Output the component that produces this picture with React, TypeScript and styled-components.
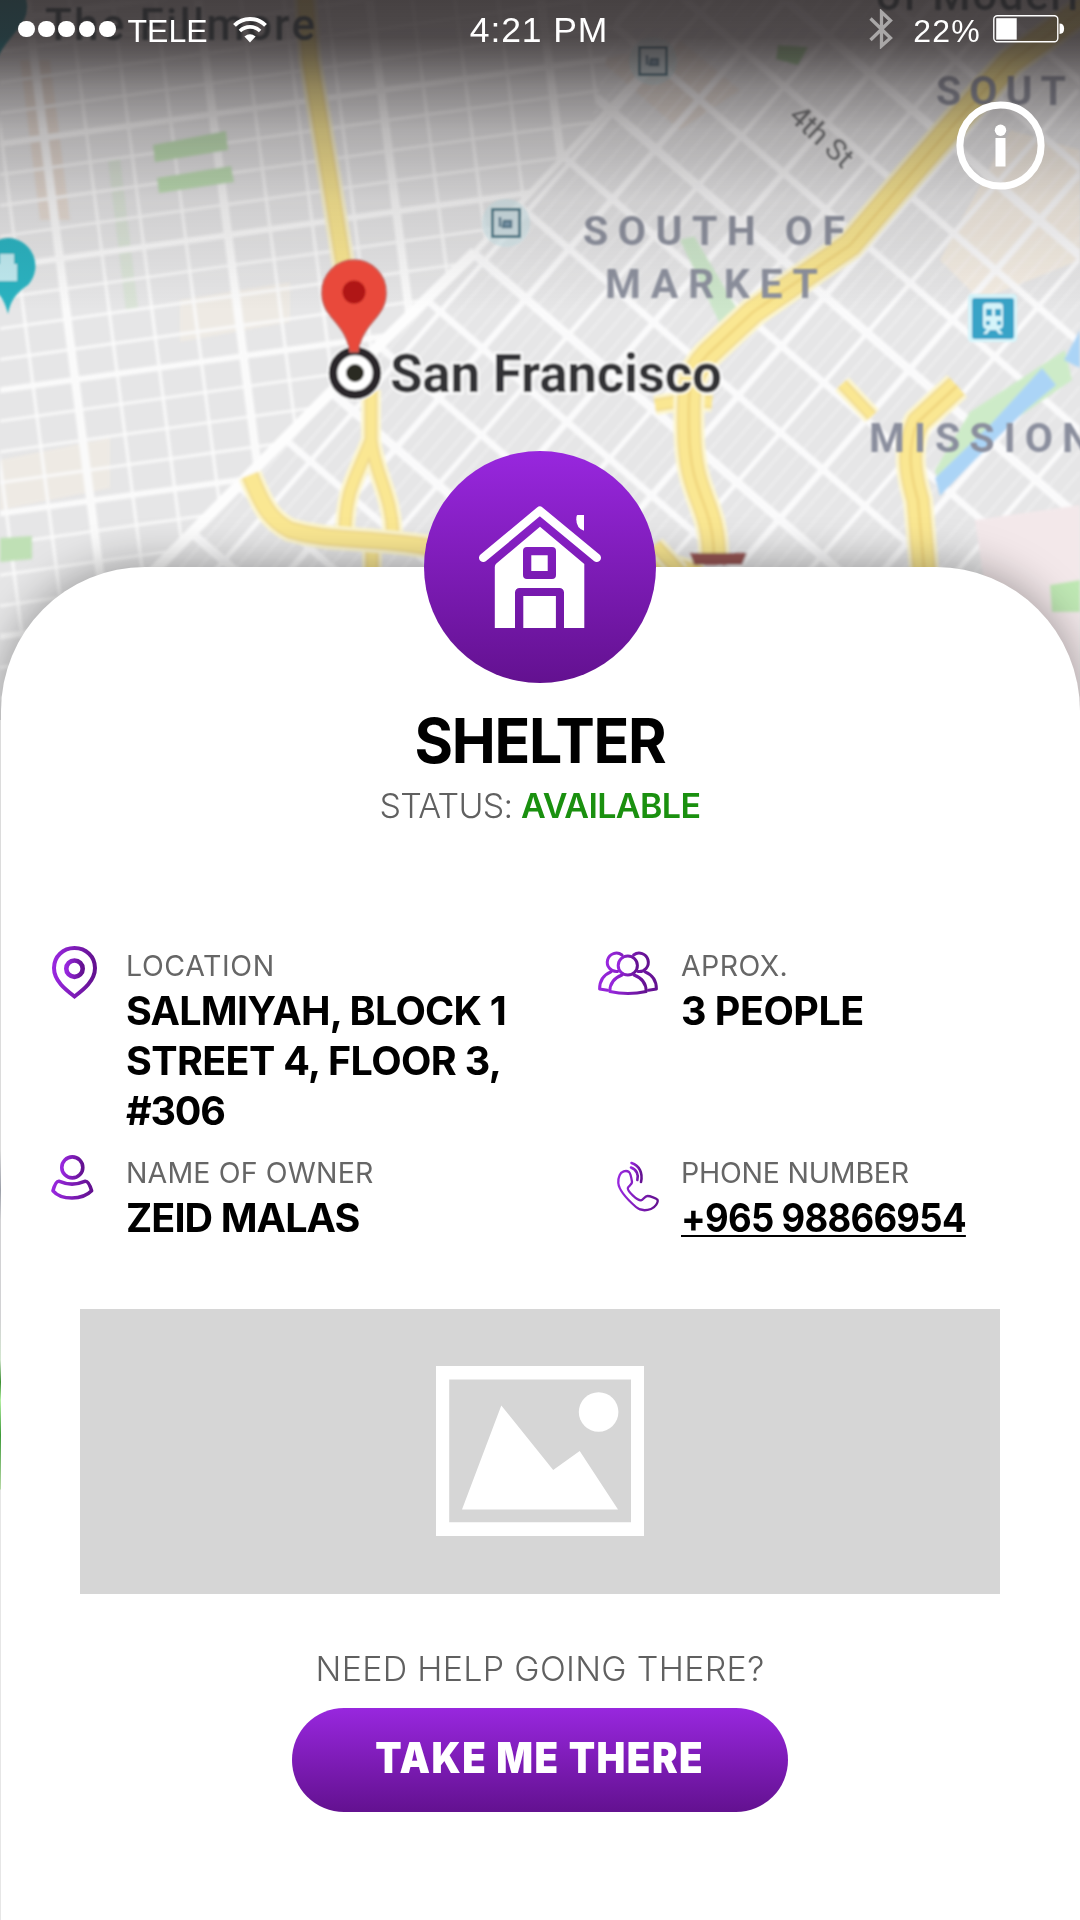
import React from "react";
import styled, { createGlobalStyle } from "styled-components";

const GlobalStyle = createGlobalStyle`
  * { box-sizing: border-box; }
  body { margin: 0; background: #fff; }
  p, h1 { margin: 0; }
`;

const Page = styled.main`
  position: relative;
  display: flex;
  flex-direction: column;
  width: 1080px;
  height: 1920px;
  overflow: hidden;
  background: #fff;
  font-family: Inter, "Liberation Sans", sans-serif;
`;

const MapBackdrop = styled.svg`
  position: absolute;
  top: 0;
  left: 0;
  width: 1080px;
  height: 760px;
`;

const StatusBar = styled.header`
  position: relative;
  display: grid;
  grid-template-columns: 1fr auto 1fr;
  align-items: center;
  height: 58px;
  padding: 0 15px 0 18px;
  color: #fff;
  font-family: "Liberation Sans", Arial, sans-serif;
`;

const StatusGroup = styled.div<{ $end?: boolean }>`
  display: flex;
  align-items: center;
  justify-content: ${(p) => (p.$end ? "flex-end" : "flex-start")};
`;

const Signal = styled.div`
  display: flex;
  gap: 3.4px;
`;

const Dot = styled.i`
  width: 16.8px;
  height: 16.8px;
  border-radius: 50%;
  background: #fff;
`;

const StatusText = styled.span<{ $size: number; $spacing?: number; $margin?: string }>`
  font-size: ${(p) => p.$size}px;
  line-height: 40px;
  letter-spacing: ${(p) => p.$spacing ?? 0}px;
  margin: ${(p) => p.$margin ?? "0"};
  white-space: nowrap;
`;

const Toolbar = styled.nav`
  position: relative;
  display: flex;
  justify-content: flex-end;
  height: 509px;
  padding: 43px 35px 0 0;
`;

const InfoButton = styled.button`
  width: 89px;
  height: 89px;
  padding: 0;
  border: 0;
  background: none;
`;

const Card = styled.section`
  position: relative;
  display: flex;
  flex-direction: column;
  align-items: center;
  flex: 1;
  margin-left: 1px;
  padding-right: 1px;
  border-radius: 144px 144px 0 0;
  background: #fff;
  box-shadow: 0 -2px 44px rgba(0, 0, 0, 0.36);
`;

/* Sliver of the map's tail that shows beside the card. */
const MapEdge = styled.div`
  position: absolute;
  left: 0;
  top: 720px;
  width: 1px;
  height: 1200px;
  background: linear-gradient(
    #dcdcdc 0,
    #dcdcdc 430px,
    #9b9fa8 470px,
    #d2d2d4 500px,
    #d2d2d4 600px,
    #d3e6cf 640px,
    #3c8f32 662px,
    #b5f0a4 680px,
    #3d9a38 715px,
    #b6d8a4 769px,
    #e6e6e6 770px
  );
`;

const Badge = styled.div`
  width: 232px;
  height: 232px;
  margin-top: -116px;
  border-radius: 50%;
  background: linear-gradient(#9827de, #631190);
`;

const Title = styled.h1`
  margin-top: 23px;
  font-size: 62px;
  line-height: 70px;
  font-weight: 700;
  letter-spacing: -1.4px;
  transform: scaleX(0.95);
  color: #000;
`;

const Caption = styled.p<{ $top: number; $spacing: number }>`
  margin-top: ${(p) => p.$top}px;
  font-size: 34px;
  line-height: 40px;
  font-weight: 300;
  letter-spacing: ${(p) => p.$spacing}px;
  color: #606060;
  white-space: pre;
`;

const Available = styled.strong`
  font-weight: 600;
  letter-spacing: -0.6px;
  color: #1a900f;
`;

const Details = styled.div`
  display: grid;
  grid-template-columns: 548px 1fr;
  row-gap: 19px;
  width: 100%;
  margin-top: 122px;
  padding-left: 49px;
`;

const Detail = styled.div<{ $iconCell: number }>`
  display: grid;
  grid-template-columns: ${(p) => p.$iconCell}px 1fr;
`;

const IconCell = styled.div<{ $top: number; $left?: number }>`
  padding-left: ${(p) => p.$left ?? 0}px;
  margin-top: ${(p) => p.$top}px;
  svg { display: block; overflow: visible; }
`;

const Label = styled.p<{ $spacing: number }>`
  font-size: 28.5px;
  line-height: 36px;
  font-weight: 400;
  letter-spacing: ${(p) => p.$spacing}px;
  color: #666;
`;

const Value = styled.p<{ $spacing: number; $first?: boolean }>`
  margin-top: ${(p) => (p.$first ? 2 : 0)}px;
  font-size: 39.5px;
  line-height: 50px;
  font-weight: 700;
  letter-spacing: ${(p) => p.$spacing}px;
  color: #000;
  white-space: nowrap;
`;

const PhoneLink = styled.a`
  display: inline-block;
  transform: scaleX(0.924);
  transform-origin: left;
  color: inherit;
  text-decoration: underline;
  text-decoration-thickness: 2.4px;
  text-underline-offset: 3px;
  text-decoration-skip-ink: none;
`;

const Placeholder = styled.div`
  display: flex;
  align-items: center;
  justify-content: center;
  width: 920px;
  height: 285px;
  margin-top: 66px;
  background: #d6d6d6;
`;

const Action = styled.button`
  width: 496px;
  height: 104px;
  margin-top: 19px;
  padding: 0 0 4px;
  border: 0;
  border-radius: 52px;
  background: linear-gradient(#9827de, #631190);
  color: #fff;
  font-family: inherit;
  font-size: 42.5px;
  font-weight: 900;
  letter-spacing: 1.6px;
  white-space: nowrap;
`;

const ActionLabel = styled.span`
  display: inline-block;
  transform: scaleX(0.905);
`;

const range = (from: number, to: number, step: number) => {
  const out: number[] = [];
  for (let v = from; v <= to; v += step) out.push(v);
  return out;
};

const Road = ({ d, w = 16 }: { d: string; w?: number }) => (
  <g fill="none" strokeLinejoin="round">
    <path d={d} stroke="#fdf6cf" strokeWidth={w + 7} />
    <path d={d} stroke="#efd98c" strokeWidth={w} />
    <path d={d} stroke="#fae792" strokeWidth={w - 4} />
    {w > 20 && <path d={d} stroke="#efd47c" strokeWidth="2.5" />}
  </g>
);

const TransitStop = ({ x, y }: { x: number; y: number }) => (
  <g transform={`translate(${x} ${y})`}>
    <circle r="24" fill="#cfe8ec" opacity=".6" />
    <rect x="-13.5" y="-13.5" width="27" height="27" fill="#cfe0e5" stroke="#527f8d" strokeWidth="3" />
    <path d="M-6 -6v10M-2 -2h7v6h-8z" stroke="#5b7f92" strokeWidth="2.5" fill="#7f9bb0" />
  </g>
);

const Map = () => (
  <MapBackdrop viewBox="0 0 1080 760">
    <defs>
      <clipPath id="west"><path d="M0 0H620L590 130L475 250L330 390L145 575V760H0Z" /></clipPath>
      <clipPath id="east"><path d="M620 0L590 130L475 250L330 390L145 575V760H1080V0Z" /></clipPath>
      <filter id="soft"><feGaussianBlur stdDeviation="1.5" /></filter>
      <filter id="softer"><feGaussianBlur stdDeviation="1" /></filter>
      <linearGradient id="shade" x1="0" y1="0" x2="0" y2="1">
        <stop offset="0" stopColor="#282223" stopOpacity=".84" />
        <stop offset=".12" stopColor="#282223" stopOpacity=".8" />
        <stop offset=".18" stopColor="#282223" stopOpacity=".7" />
        <stop offset=".28" stopColor="#282223" stopOpacity=".5" />
        <stop offset=".42" stopColor="#282223" stopOpacity=".3" />
        <stop offset=".65" stopColor="#282223" stopOpacity=".12" />
        <stop offset="1" stopColor="#282223" stopOpacity="0" />
      </linearGradient>
    </defs>
    <rect width="1080" height="760" fill="#e6e6e7" />
    <g filter="url(#soft)">
      <g clipPath="url(#west)">
        <path d="M20 60h30l20 160h-30z" fill="#e4dad2" />
        <path d="M180 300l110-18v40l-110 20zM0 460l110-22v50l-110 22z" fill="#eeeae4" />
        <path d="M108 160l12-2 18 150-12 3z" fill="#d5e3d2" opacity=".7" />
        <g transform="rotate(-8)" stroke="#fafafa" fill="none">
          {range(-10, 800, 30.5).map((y, i) => (
            <path key={y} d={`M-150 ${y}H900`} strokeWidth={i % 4 === 1 ? 6 : 2.8} />
          ))}
          {range(-100, 800, 42.5).map((x, i) => (
            <path key={x} d={`M${x} -80L${x - 12} 860`} strokeWidth={i % 4 === 3 ? 8.5 : 3} />
          ))}
        </g>
        <path d="M153 145L226 131L228 150L155 162ZM157 178L231 166L234 182L159 193ZM0 538L32 536V559L0 562Z" fill="#bfe0b5" />
      </g>
      <g clipPath="url(#east)">
        <path d="M1010 130L1080 150V260L980 300L940 260Z" fill="#f3ece2" />
        <path d="M600 60l80-20 60 50-60 40z" fill="#e6dcd2" opacity=".7" />
        <g transform="translate(479 258) rotate(41)" stroke="#fafafb" fill="none">
          {range(-330, 870, 14).map((x) => (
            <path key={x} d={`M${x} -520V640`} strokeWidth="2" opacity=".45" />
          ))}
          {range(-528, 620, 66).map((y, i) => (
            <path key={y} d={`M-400 ${y}H800`} strokeWidth={i % 3 === 2 ? 9 : 7} />
          ))}
          {range(-330, 870, 56).map((x, i) => (
            <path key={x} d={`M${x} -520V640`} strokeWidth={i % 2 ? 6.5 : 5} />
          ))}
        </g>
        <path d="M680 240l14-4 44 74-18 14z" fill="#cde6cb" />
        <path d="M778 45l30 2-10 18-22-6z" fill="#9fc897" />
      </g>
      <path d="M140 585L330 393L475 252" stroke="#fdfdfd" strokeWidth="11" fill="none" />
      <path d="M475 252L650 65" stroke="#fafafa" strokeWidth="6" fill="none" />
      <path d="M975 520L1080 505V760H1010Z" fill="#f3e8ea" />
      <path d="M970 412L1065 350L1072 380L1000 430L940 490L935 470Z" fill="#cdebc8" />
      <path d="M1080 330L1064 360L1080 368ZM1042 368L1056 385L1026 410L975 460L940 496L935 478L990 425Z" fill="#abd4f6" />
      <path d="M1050 585L1080 580V612H1052Z" fill="#bfe8b4" />
      <Road d="M305 -5L310 60L330 180L346 280" />
      <Road d="M371 390V440C355 480 345 490 345 535M371 440C375 475 392 495 393 535M372 540V580" w={13} />
      <Road d="M250 475C262 505 270 520 290 530C330 542 360 536 430 547C520 560 610 540 700 575" w={17} />
      <Road d="M655 405L688 400L712 402M655 545L680 572" w={13} />
      <Road d="M1090 5L1010 62L953 125L901 185L850 245L753 312L708 354C688 375 688 390 689 430C690 500 714 500 714 560" w={24} />
      <Road d="M842 384L872 416" w={12} />
      <Road d="M957 386L918 422C905 450 912 480 918 500L925 580" w={23} />
      <path d="M690 553H747L742 565H694Z" fill="#965452" />
    </g>
    <g filter="url(#softer)" fontFamily="Roboto, sans-serif">
      <path d="M-8 -20a28 28 0 0 1 32 40C16 34 2 45 -4 62Z" fill="#1f94a3" />
      <path d="M8 238a28 28 0 0 1 20 47C18 292 11 298 8 314C4 298 -2 292 -12 285A28 28 0 0 1 8 238Z" fill="#2bb3c1" />
      <path d="M0 254h14v10h3v17H-2v-17h2z" fill="#bfeaf0" />
      <text x="45" y="40" fontSize="44" fontWeight="500" textLength="270" fill="#3d565d">The Fillmore</text>
      <text x="876" y="10" fontSize="44" fontWeight="500" textLength="216" fill="#3d565d">of Modern</text>
      <text x="583" y="245" fontSize="41" fontWeight="700" textLength="262" fill="#8c909d">SOUTH OF</text>
      <text x="605" y="298" fontSize="41" fontWeight="700" textLength="213" fill="#8c909d">MARKET</text>
      <text x="936" y="105" fontSize="41" fontWeight="700" letterSpacing="8" fill="#8c909d">SOUT</text>
      <text x="869" y="452" fontSize="41" fontWeight="700" textLength="222" fill="#8a8e9d">MISSION</text>
      <text transform="translate(787 118) rotate(43)" fontSize="30" fontWeight="500" textLength="76" fill="#77797b" stroke="#f0f0f0" strokeWidth="3" paintOrder="stroke">4th St</text>
      <TransitStop x={506} y={223} />
      <TransitStop x={653} y={61} />
      <rect x="968" y="294" width="49" height="48" rx="4" fill="#d5f4fa" />
      <rect x="972" y="298" width="42" height="41" rx="3" fill="#37a3c7" />
      <path d="M983 306q0-3 4-3h12q4 0 4 3v19q0 4-4 4l4 5h-4l-3-4h-6l-3 4h-4l4-5q-4 0-4-4z" fill="#d5f4fa" />
      <path d="M986 309h6v7h-6zM995 309h6v7h-6zM986 321h4v4h-4zM997 321h4v4h-4z" fill="#37a3c7" />
    </g>
    <rect width="1080" height="310" fill="url(#shade)" />
    <g filter="url(#softer)">
      <circle cx="355" cy="373" r="28" fill="#fff" />
      <circle cx="355" cy="373" r="22" fill="#fff" stroke="#2b282c" strokeWidth="8.5" />
      <circle cx="355" cy="373" r="9" fill="#2b2a24" />
      <path d="M354 260a32 32 0 0 1 32 33C386 318 362 322 358 352H350C346 322 322 318 322 293A32 32 0 0 1 354 260Z" fill="#e9483a" stroke="#c55c55" strokeWidth="1.5" />
      <circle cx="354" cy="292" r="11.5" fill="#b01217" />
      <text x="390" y="392" fontFamily="Roboto, sans-serif" fontSize="53" fontWeight="700" textLength="332" fill="#333336" stroke="#fff" strokeWidth="5" strokeOpacity=".7" paintOrder="stroke">San Francisco</text>
    </g>
  </MapBackdrop>
);

const Wifi = () => (
  <svg width="34" height="27" viewBox="0 0 34 27" fill="none" stroke="#fff">
    <path d="M1.5 9.3A22 22 0 0 1 32.5 9.3" strokeWidth="4" />
    <path d="M6.9 15A14.5 14.5 0 0 1 27.1 15" strokeWidth="3.6" />
    <path d="M17 26.5L11.4 20.6Q17 15.8 22.6 20.6Z" fill="#fff" stroke="none" />
  </svg>
);

const Bluetooth = () => (
  <svg width="24" height="40" viewBox="0 0 24 40" fill="none" stroke="#a9a7a7" strokeWidth="3.3">
    <path d="M1.5 9.5L21.5 29L12.5 37V3L21.5 11.5L1.5 31" />
  </svg>
);

const Battery = () => (
  <svg width="72" height="28" viewBox="0 0 72 28">
    <rect x=".8" y=".8" width="64" height="26" rx="3.5" fill="none" stroke="#fff" strokeWidth="1.4" />
    <rect x="3.2" y="3.2" width="20.5" height="21.4" fill="#fff" />
    <path d="M66.5 8.5q4.6 0 4.6 5.2t-4.6 5.2z" fill="#fff" />
  </svg>
);

const House = () => (
  <svg width="232" height="232" viewBox="424 451 232 232">
    <path d="M483.3 557.8L539.8 510.8L596.7 557.8" fill="none" stroke="#fff" strokeWidth="8.6" strokeLinecap="round" strokeLinejoin="round" />
    <path
      fillRule="evenodd"
      fill="#fff"
      d="M540 526.8L584.3 564V628H564V592.5a4.5 4.5 0 0 0-4.5-4.5h-40a4.5 4.5 0 0 0-4.5 4.5V628H494.8V567q0-2 1.6-3.4zM527 547h25q4 0 4 4v24q0 4-4 4h-25q-4 0-4-4v-24q0-4 4-4z"
    />
    <path d="M531.3 555.2h16.4v15.8h-16.4zM523.3 596h32.6v32h-32.6z" fill="#fff" />
    <path d="M577.5 515H584V530.8Q576.3 528 576.3 519.5Q576.3 515 577.5 515Z" fill="#fff" />
  </svg>
);

const Purple = ({ id }: { id: string }) => (
  <defs>
    <linearGradient id={id}>
      <stop offset="0" stopColor="#9827de" />
      <stop offset="1" stopColor="#631190" />
    </linearGradient>
  </defs>
);

const PinIcon = () => (
  <svg width="45" height="53" viewBox="0 0 45 53" fill="none" stroke="url(#gPin)" strokeWidth="4">
    <Purple id="gPin" />
    <path d="M22.5 2C11 2 2 10.5 2 22C2 35 14 44 22.5 50.5C31 44 43 35 43 22C43 10.5 34 2 22.5 2Z" />
    <circle cx="22.5" cy="22.7" r="8.2" strokeWidth="4.6" />
  </svg>
);

const UserIcon = () => (
  <svg width="43" height="46" viewBox="0 0 43 46" fill="none" stroke="url(#gUser)" strokeWidth="3.6" strokeLinejoin="round">
    <Purple id="gUser" />
    <circle cx="21.3" cy="12.4" r="10.5" />
    <path d="M7.7 26.2C16 29.8 26 29.8 34.5 26.2C37.5 26.2 39.5 32 40.6 35.8C36 40.5 29 43 21 43C13 43 6 40.5 2 35.8C3 32 5 26.2 7.7 26.2Z" />
  </svg>
);

const PeopleIcon = () => (
  <svg width="60" height="43" viewBox="0 0 60 43" fill="none" stroke="url(#gPeople)" strokeWidth="3" strokeLinejoin="round" strokeLinecap="round">
    <Purple id="gPeople" />
    <circle cx="29.8" cy="13.5" r="9.6" />
    <path d="M24 3A9.2 9.2 0 1 0 19.5 19.5M35.6 3A9.2 9.2 0 1 1 40 19.5" />
    <path d="M24 23C16 26 11.8 32 11.8 39.5C23 42 37 42 48.2 39.5C48.2 32 44 26 36 23" />
    <path d="M13 19.8C5 23 1.6 29 1.6 37L9.5 38.3M47 19.8C55 23 58.4 29 58.4 37L50.5 38.3" />
  </svg>
);

const PhoneIcon = () => (
  <svg width="42" height="50" viewBox="0 0 42 50" fill="none" stroke="url(#gPhone)" strokeWidth="2.3" strokeLinejoin="round" strokeLinecap="round">
    <Purple id="gPhone" />
    <path d="M2.5 13.5C4 9.5 9 7.8 12 10C14 12 14.5 17 15 20C15.3 23 10.5 24 10.8 26.5C11 29.5 20 38.5 24 38.3C26.5 38 27.5 34 30.5 34C33.5 34 39 36.3 40.3 37.5C42 40 38 45.5 34 47C29 48.8 23 48.5 19 45C11 38 2 29 1.3 21Q1 17 2.5 13.5Z" />
    <path d="M14.5 1C22.5 3.5 26 11 24 20M14 5.5C19.5 7.5 22 13 20.3 18" strokeWidth="2.6" />
  </svg>
);

const PictureIcon = () => (
  <svg width="208" height="170" viewBox="0 0 208 170" fill="#fff">
    <path fillRule="evenodd" d="M0 0H208V170H0ZM13.2 13.5V156.3H195V13.5Z" />
    <circle cx="162.6" cy="46" r="19.8" />
    <path d="M26 143.5L65.3 39.5L117.2 104L143.7 85L182 143.5Z" />
  </svg>
);

export default function App() {
  return (
    <Page>
      <GlobalStyle />
      <Map />
      <StatusBar>
        <StatusGroup>
          <Signal>
            {[0, 1, 2, 3, 4].map((n) => (
              <Dot key={n} />
            ))}
          </Signal>
          <StatusText $size={32} $margin="3px 25px 0 12px">TELE</StatusText>
          <Wifi />
        </StatusGroup>
        <StatusText $size={35.5} $spacing={0.9} $margin="1px 5px 0 0">4:21 PM</StatusText>
        <StatusGroup $end>
          <Bluetooth />
          <StatusText $size={32} $spacing={1.2} $margin="3px 12px 0 20px">22%</StatusText>
          <Battery />
        </StatusGroup>
      </StatusBar>
      <Toolbar>
        <InfoButton aria-label="Info">
          <svg width="89" height="89" viewBox="0 0 89 89">
            <circle cx="44.5" cy="44.5" r="40.6" fill="none" stroke="#fff" strokeWidth="7" />
            <circle cx="44.5" cy="29.3" r="5.7" fill="#fff" />
            <rect x="39.5" y="37" width="10" height="28.5" fill="#fff" />
          </svg>
        </InfoButton>
      </Toolbar>
      <Card>
        <Badge>
          <House />
        </Badge>
        <Title>SHELTER</Title>
        <Caption $top={9.5} $spacing={-0.75}>
          STATUS: <Available>AVAILABLE</Available>
        </Caption>
        <Details>
          <Detail $iconCell={76}>
            <IconCell $top={-2} $left={2}><PinIcon /></IconCell>
            <div>
              <Label $spacing={0.6}>LOCATION</Label>
              <Value $first $spacing={-0.75}>SALMIYAH, BLOCK 1</Value>
              <Value $spacing={-0.65}>STREET 4, FLOOR 3,</Value>
              <Value $spacing={-1.2}>#306</Value>
            </div>
          </Detail>
          <Detail $iconCell={83}>
            <IconCell $top={4}><PeopleIcon /></IconCell>
            <div>
              <Label $spacing={0.4}>APROX.</Label>
              <Value $first $spacing={-0.5}>3 PEOPLE</Value>
            </div>
          </Detail>
          <Detail $iconCell={76}>
            <IconCell $top={0} $left={1}><UserIcon /></IconCell>
            <div>
              <Label $spacing={0.15}>NAME OF OWNER</Label>
              <Value $first $spacing={-0.9}>ZEID MALAS</Value>
            </div>
          </Detail>
          <Detail $iconCell={83}>
            <IconCell $top={7} $left={19}><PhoneIcon /></IconCell>
            <div>
              <Label $spacing={-0.2}>PHONE NUMBER</Label>
              <Value $first $spacing={-0.8}><PhoneLink>+965 98866954</PhoneLink></Value>
            </div>
          </Detail>
        </Details>
        <Placeholder>
          <PictureIcon />
        </Placeholder>
        <Caption $top={55} $spacing={0.3}>NEED HELP GOING THERE?</Caption>
        <Action><ActionLabel>TAKE ME THERE</ActionLabel></Action>
      </Card>
      <MapEdge />
    </Page>
  );
}
